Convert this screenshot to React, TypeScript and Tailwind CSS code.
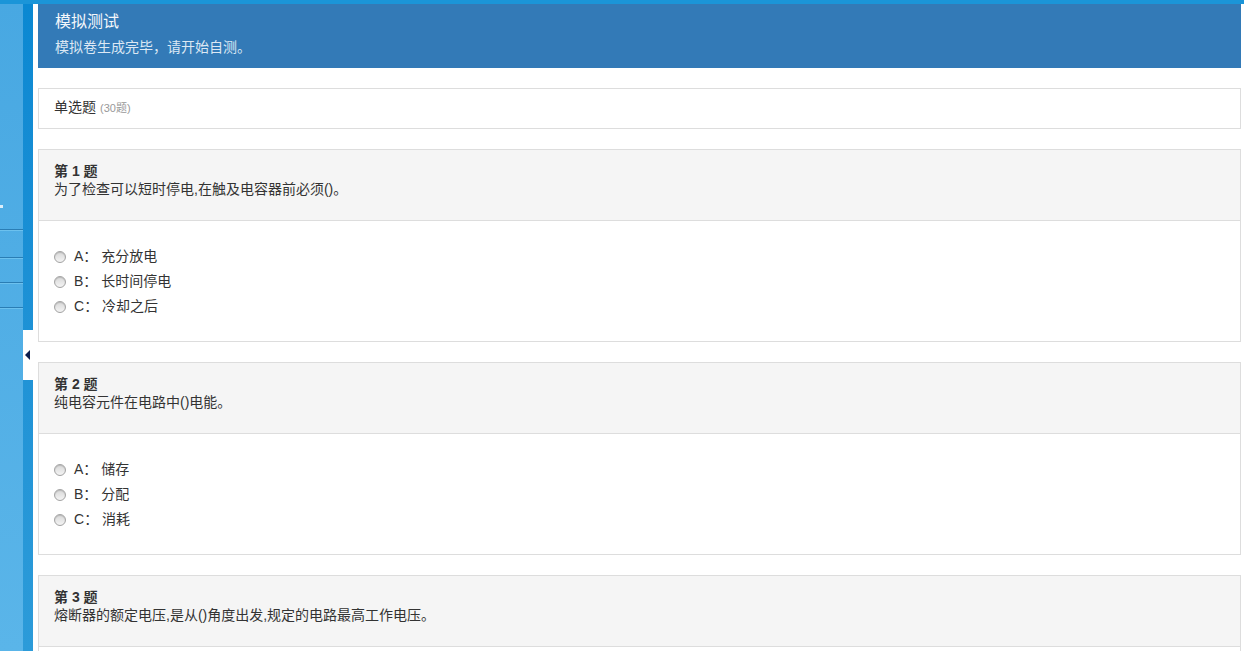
import React from 'react';

interface Question {
  no: number;
  text: string;
  options: { key: string; label: string }[];
}

const questions: Question[] = [
  {
    no: 1,
    text: '为了检查可以短时停电,在触及电容器前必须()。',
    options: [
      { key: 'A', label: '充分放电' },
      { key: 'B', label: '长时间停电' },
      { key: 'C', label: '冷却之后' },
    ],
  },
  {
    no: 2,
    text: '纯电容元件在电路中()电能。',
    options: [
      { key: 'A', label: '储存' },
      { key: 'B', label: '分配' },
      { key: 'C', label: '消耗' },
    ],
  },
  {
    no: 3,
    text: '熔断器的额定电压,是从()角度出发,规定的电路最高工作电压。',
    options: [],
  },
];

const font = { fontFamily: '"Liberation Sans", "Noto Sans CJK SC", sans-serif' };

const SideLine: React.FC = () => (
  <div>
    <div className="h-px bg-[#2a7db4]" />
    <div className="h-px bg-[#6cc1ee]" />
  </div>
);

const Radio: React.FC = () => (
  <span className="inline-block w-3 h-3 rounded-full border border-[#a3a3a3] bg-gradient-to-b from-[#d8d8d8] to-[#f4f4f4] shadow-[inset_0_1px_1px_rgba(0,0,0,0.15)]" />
);

const QuestionCard: React.FC<{ q: Question }> = ({ q }) => (
  <div className="border border-[#dddddd] bg-white mb-[20px]">
    <div className="bg-[#f5f5f5] border-b border-[#dddddd] px-[15px] pt-[12px] pb-[22px] text-[14px] text-[#333]">
      <div className="font-bold leading-[18px]">第 {q.no} 题</div>
      <div className="leading-[18px]">{q.text}</div>
    </div>
    <div className="px-[15px] pt-[23px] pb-[22px] min-h-[120px]">
      {q.options.map((o) => (
        <div key={o.key} className="flex items-center h-[25px] text-[14px] text-[#333]">
          <Radio />
          <span className="ml-[8px]">
            {o.key}： {o.label}
          </span>
        </div>
      ))}
    </div>
  </div>
);

export default function App() {
  return (
    <div className="w-[1244px] h-[651px] overflow-hidden flex flex-col bg-white" style={font}>
      {/* top strip */}
      <div className="h-[4px] shrink-0 bg-[#1b95d8]" />

      <div className="flex flex-1 min-h-0">
        {/* sidebar */}
        <div className="w-[23px] shrink-0 flex flex-col bg-gradient-to-b from-[#48a8e2] to-[#5ab5e9]">
          <div className="h-[225px] flex flex-col justify-end pb-[21px]">
            <div className="w-[3px] h-[3px] bg-white/80" />
          </div>
          <SideLine />
          <div className="h-[26px]" />
          <SideLine />
          <div className="h-[23px]" />
          <SideLine />
          <div className="h-[23px]" />
          <SideLine />
        </div>

        {/* collapse strip */}
        <div className="w-[10px] shrink-0 flex flex-col bg-gradient-to-b from-[#0a88d2] to-[#2c9bd9]">
          <div className="h-[326px]" />
          <div className="h-[50px] bg-white flex items-center pl-[2px]">
            <span className="w-0 h-0 border-y-[5px] border-y-transparent border-r-[5px] border-r-[#0b1c4d]" />
          </div>
        </div>

        {/* main */}
        <div className="flex-1 min-w-0 pl-[5px] pr-[3px]">
          <div className="bg-[#337ab7] h-[64px] px-[17px] pt-[7px]">
            <div className="text-[16px] leading-[22px] text-[#f4f7fb]">模拟测试</div>
            <div className="mt-[4px] text-[14px] leading-[20px] text-[#dce8f4]">模拟卷生成完毕，请开始自测。</div>
          </div>

          <div className="mt-[20px] mb-[20px] h-[41px] border border-[#dddddd] px-[15px] pt-[6px]">
            <span className="text-[14px] leading-[20px] text-[#333]">单选题</span>
            <span className="ml-[4px] text-[11px] text-[#999]">(30题)</span>
          </div>

          {questions.map((q) => (
            <QuestionCard key={q.no} q={q} />
          ))}
        </div>
      </div>
    </div>
  );
}
